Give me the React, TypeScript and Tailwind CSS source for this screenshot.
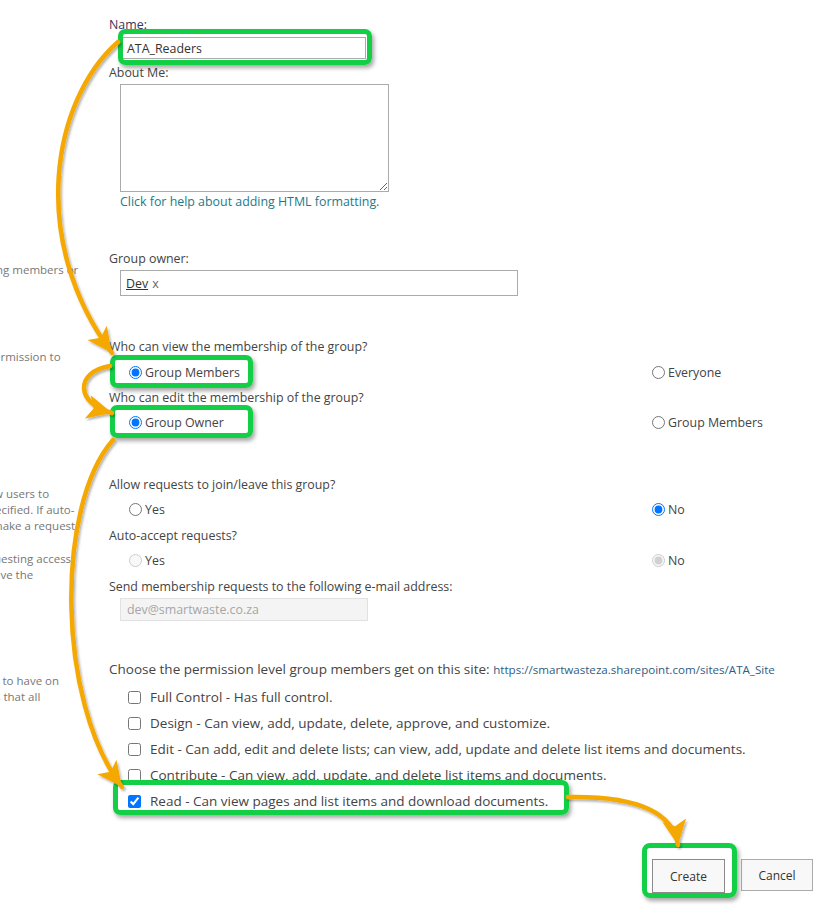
const font = { fontFamily: '"Open Sans", "Noto Sans", sans-serif' };

function Radio({ checked, disabled, label }: { checked?: boolean; disabled?: boolean; label: string }) {
  return (
    <label className="flex items-center gap-[3px] h-[17px]">
      <input type="radio" defaultChecked={checked} disabled={disabled} className="m-0 w-[13px] h-[13px]" readOnly />
      <span className="text-[#444]">{label}</span>
    </label>
  );
}

function Check({ checked, label }: { checked?: boolean; label: string }) {
  return (
    <label className="flex items-center gap-[9px] h-[20px] pl-[19px]">
      <input type="checkbox" defaultChecked={checked} className="m-0 w-[13px] h-[13px]" readOnly />
      <span className="text-[#444] text-[13.5px] whitespace-nowrap">{label}</span>
    </label>
  );
}

function Desc({ text, ml }: { text: string; ml: string }) {
  return <div className={"whitespace-nowrap h-[16px] leading-[16px] " + ml}>{text}</div>;
}

export default function App() {
  return (
    <div className="relative w-[826px] h-[905px] bg-white overflow-hidden text-[12.4px] leading-[17px]" style={font}>
      <div className="flex">
        {/* left description column (cropped) */}
        <div className="w-[109px] shrink-0 overflow-hidden text-[11.5px] text-[#777]">
          <div className="mt-[262px]">
            <Desc text="ng members or" ml="-ml-[4px]" />
          </div>
          <div className="mt-[71px]">
            <Desc text="ermission to" ml="-ml-[6px]" />
          </div>
          <div className="mt-[121px]">
            <Desc text="w users to" ml="-ml-[6px]" />
            <Desc text="ecified. If auto-" ml="-ml-[5px]" />
            <Desc text="make a request." ml="-ml-[8px]" />
          </div>
          <div className="mt-[17px]">
            <Desc text="uesting access" ml="-ml-[6px]" />
            <Desc text="ave the" ml="-ml-[6px]" />
          </div>
          <div className="mt-[90px]">
            <Desc text="s to have on" ml="-ml-[6px]" />
            <Desc text="s that all" ml="-ml-[5px]" />
          </div>
        </div>

        {/* main form column */}
        <div className="flex-1 text-[#444]">
          <div className="mt-[16px] h-[17px] text-[#3d3552]">Name:</div>
          <div className="mt-[4px] ml-[11px] w-[246px] h-[22px] border border-[#ababab] flex items-center pl-[6px] text-[#333]">
            ATA_Readers
          </div>
          <div className="mt-[5px] h-[17px]">About Me:</div>
          <textarea
            className="block mt-[3px] ml-[11px] w-[269px] h-[108px] border border-[#ababab] bg-white outline-none"
            defaultValue=""
          />
          <div className="mt-[1px] ml-[11px] h-[17px] text-[#1a7a8c]">Click for help about adding HTML formatting.</div>

          <div className="mt-[40px] h-[17px]">Group owner:</div>
          <div className="mt-[3px] ml-[11px] w-[398px] h-[26px] border border-[#ababab] flex items-center pl-[5px] text-[#333]">
            <span className="underline">Dev</span>
            <span className="ml-[4px] text-[#666]">x</span>
          </div>

          <div className="mt-[42px] h-[17px]">Who can view the membership of the group?</div>
          <div className="mt-[9px] flex pl-[20px]">
            <div className="w-[523px]">
              <Radio checked label="Group Members" />
            </div>
            <Radio label="Everyone" />
          </div>
          <div className="mt-[8px] h-[17px]">Who can edit the membership of the group?</div>
          <div className="mt-[8px] flex pl-[20px]">
            <div className="w-[523px]">
              <Radio checked label="Group Owner" />
            </div>
            <Radio label="Group Members" />
          </div>

          <div className="mt-[45px] h-[17px]">Allow requests to join/leave this group?</div>
          <div className="mt-[8px] flex pl-[20px]">
            <div className="w-[523px]">
              <Radio label="Yes" />
            </div>
            <Radio checked label="No" />
          </div>
          <div className="mt-[9px] h-[17px]">Auto-accept requests?</div>
          <div className="mt-[8px] flex pl-[20px]">
            <div className="w-[523px]">
              <Radio disabled label="Yes" />
            </div>
            <Radio disabled checked label="No" />
          </div>
          <div className="mt-[9px] h-[17px]">Send membership requests to the following e-mail address:</div>
          <div className="mt-[3px] ml-[11px] w-[248px] h-[23px] border border-[#e1e1e1] bg-[#f4f4f4] flex items-center pl-[6px] text-[#a6a6a6]">
            dev@smartwaste.co.za
          </div>

          <div className="mt-[40px] h-[17px] whitespace-nowrap text-[13.5px]">
            Choose the permission level group members get on this site:{" "}
            <span className="text-[11.6px] text-[#2f5d85]">https://smartwasteza.sharepoint.com/sites/ATA_Site</span>
          </div>
          <div className="mt-[9px] flex flex-col gap-[6px]">
            <Check label="Full Control - Has full control." />
            <Check label="Design - Can view, add, update, delete, approve, and customize." />
            <Check label="Edit - Can add, edit and delete lists; can view, add, update and delete list items and documents." />
            <Check label="Contribute - Can view, add, update, and delete list items and documents." />
            <Check checked label="Read - Can view pages and list items and download documents." />
          </div>

          <div className="mt-[48px] flex pl-[543px] gap-[16px]">
            <button className="w-[73px] h-[34px] border border-[#8a8a8a] bg-[#f8f8f8] text-[#333] text-[12px]">Create</button>
            <button className="w-[72px] h-[32px] border border-[#ababab] bg-[#f8f8f8] text-[#333] text-[12px]">Cancel</button>
          </div>
        </div>
      </div>

      {/* annotation overlay: green highlight boxes */}
      <div className="absolute left-[118px] top-[29px] w-[254px] h-[36px] border-[5px] border-[#12cf46] rounded-[7px] shadow-[2px_3px_4px_rgba(0,0,0,0.35)]" />
      <div className="absolute left-[110px] top-[355px] w-[143px] h-[33px] border-[5px] border-[#12cf46] rounded-[7px] shadow-[2px_3px_4px_rgba(0,0,0,0.35)]" />
      <div className="absolute left-[110px] top-[405px] w-[143px] h-[33px] border-[5px] border-[#12cf46] rounded-[7px] shadow-[2px_3px_4px_rgba(0,0,0,0.35)]" />
      <div className="absolute left-[113px] top-[780px] w-[456px] h-[35px] border-[5px] border-[#12cf46] rounded-[7px] shadow-[2px_3px_4px_rgba(0,0,0,0.35)]" />
      <div className="absolute left-[642px] top-[843px] w-[95px] h-[55px] border-[5px] border-[#12cf46] rounded-[8px] shadow-[2px_3px_4px_rgba(0,0,0,0.35)]" />

      {/* annotation overlay: orange arrows */}
      <svg className="absolute left-0 top-0 pointer-events-none" width="826" height="905" viewBox="0 0 826 905">
        <defs>
          <filter id="sh" x="-20%" y="-20%" width="140%" height="140%">
            <feDropShadow dx="1.5" dy="2" stdDeviation="1.2" floodColor="#000" floodOpacity="0.3" />
          </filter>
          <marker id="ah" markerUnits="userSpaceOnUse" markerWidth="30" markerHeight="30" refX="25" refY="13" orient="auto">
            <path d="M0,1 L25,13 L0,25 L6,13 Z" fill="#f5a800" />
          </marker>
        </defs>
        <g fill="none" stroke="#f5a800" strokeWidth="4.5" strokeLinecap="round" filter="url(#sh)">
          <path d="M118,42 C52,100 28,240 112,353" markerEnd="url(#ah)" />
          <path d="M110,366 C74,372 76,404 112,413" markerEnd="url(#ah)" />
          <path d="M113,440 C56,505 56,700 122,787" markerEnd="url(#ah)" />
          <path d="M568,797 C622,796 672,806 678,845" markerEnd="url(#ah)" />
        </g>
      </svg>
    </div>
  );
}
